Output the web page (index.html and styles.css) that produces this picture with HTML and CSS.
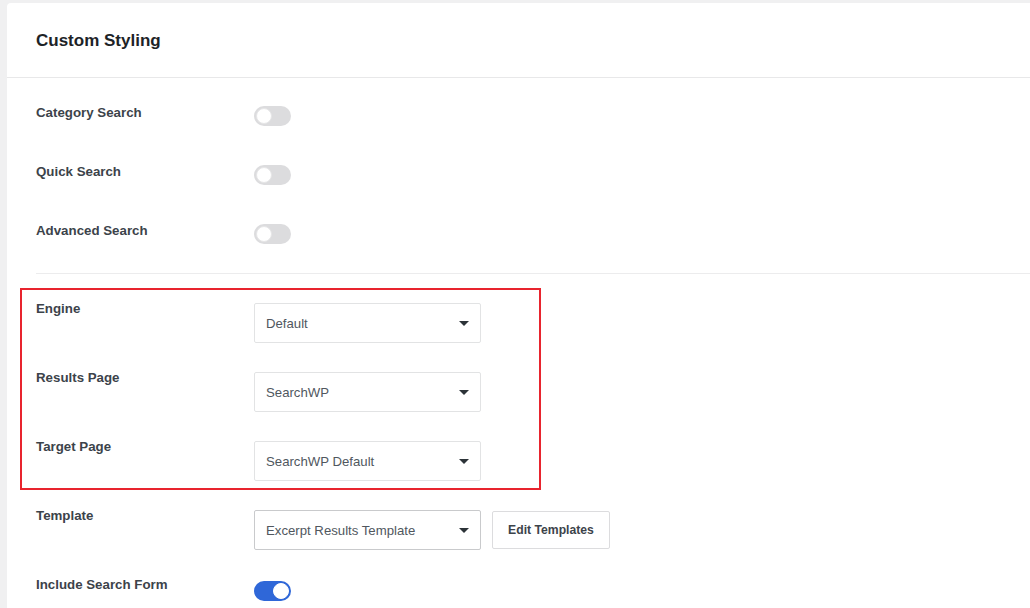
FILE: index.html
```html
<!DOCTYPE html>
<html lang="en">
<head>
<meta charset="utf-8">
<title>Custom Styling</title>
<link rel="stylesheet" href="styles.css">
</head>
<body>
<div class="page">
  <section class="card">
    <header class="card-header">
      <h2 class="card-title">Custom Styling</h2>
    </header>
    <div class="card-body">
      <div class="group toggles">
        <div class="row">
          <span class="label">Category Search</span>
          <span class="toggle"><span class="knob"></span></span>
        </div>
        <div class="row">
          <span class="label">Quick Search</span>
          <span class="toggle"><span class="knob"></span></span>
        </div>
        <div class="row">
          <span class="label">Advanced Search</span>
          <span class="toggle"><span class="knob"></span></span>
        </div>
      </div>
      <div class="group selects">
        <div class="highlight"></div>
        <div class="row">
          <span class="label">Engine</span>
          <div class="control"><div class="select">Default<span class="caret"></span></div></div>
        </div>
        <div class="row">
          <span class="label">Results Page</span>
          <div class="control"><div class="select">SearchWP<span class="caret"></span></div></div>
        </div>
        <div class="row">
          <span class="label">Target Page</span>
          <div class="control"><div class="select">SearchWP Default<span class="caret"></span></div></div>
        </div>
        <div class="row">
          <span class="label">Template</span>
          <div class="control">
            <div class="select select-dark">Excerpt Results Template<span class="caret"></span></div>
            <button class="btn" type="button">Edit Templates</button>
          </div>
        </div>
        <div class="row">
          <span class="label">Include Search Form</span>
          <div class="control"><span class="toggle on"><span class="knob"></span></span></div>
        </div>
      </div>
    </div>
  </section>
</div>
</body>
</html>
```

FILE: styles.css
```css
html, body {
  margin: 0;
  padding: 0;
  overflow: hidden;
  background: #f0f0f1;
  font-family: "Liberation Sans", Arial, sans-serif;
  color: #3c434a;
}

.page {
  padding: 3px 0 0 7px;
  height: 605px;
}

.card {
  width: 1060px;
  min-height: 620px;
  background: #fff;
  border-radius: 4px 0 0 0;
}

.card-header {
  box-sizing: border-box;
  height: 75px;
  padding-top: 2px;
  border-bottom: 1px solid #e8e8e9;
  display: flex;
  align-items: center;
  padding-left: 29px;
}

.card-title {
  margin: 0;
  font-size: 17px;
  font-weight: bold;
  color: #1d2327;
}

.card-body {
  padding-left: 29px;
}

.group {
  position: relative;
  display: flex;
  flex-direction: column;
}

.toggles {
  padding: 26px 0 29px;
  gap: 37px;
  border-bottom: 1px solid #ececed;
}

.selects {
  padding-top: 26px;
  gap: 26px;
}

.row {
  display: grid;
  grid-template-columns: 218px 1fr;
  align-items: start;
}

.label {
  padding-top: 1px;
  font-size: 13.3px;
  line-height: 16px;
  font-weight: bold;
  color: #3c434a;
}

.toggle {
  position: relative;
  display: block;
  margin-top: 2px;
  width: 37px;
  height: 20px;
  border-radius: 10px;
  background: #dcdcde;
}

.toggle .knob {
  position: absolute;
  top: 2px;
  left: 2px;
  box-sizing: border-box;
  width: 16px;
  height: 16px;
  border-radius: 50%;
  background: #fff;
  border: 1px solid #e6e6e7;
}

.toggle.on {
  background: #2f67d8;
}

.toggle.on .knob {
  left: 19px;
  border-color: #fff;
}

.control {
  display: flex;
  align-items: center;
  gap: 11px;
  margin-top: 3px;
}

.select {
  position: relative;
  box-sizing: border-box;
  width: 227px;
  height: 40px;
  padding: 0 11px;
  display: flex;
  align-items: center;
  font-size: 13.2px;
  color: #50575e;
  background: #fff;
  border: 1px solid #e2e3e4;
  border-radius: 2px;
}

.select-dark {
  border-color: #c9cacc;
}

.caret {
  position: absolute;
  right: 11px;
  top: 17px;
  width: 0;
  height: 0;
  border-left: 5px solid transparent;
  border-right: 5px solid transparent;
  border-top: 5px solid #2c3338;
}

.btn {
  box-sizing: border-box;
  width: 118px;
  height: 38px;
  padding: 0;
  font-family: inherit;
  font-size: 12.2px;
  font-weight: bold;
  color: #3c434a;
  background: #fff;
  border: 1px solid #dcdcde;
  border-radius: 2px;
}

.highlight {
  position: absolute;
  left: -16px;
  top: 14px;
  width: 521px;
  height: 202px;
  box-sizing: border-box;
  border: 2px solid #e8242e;
  pointer-events: none;
}
```
